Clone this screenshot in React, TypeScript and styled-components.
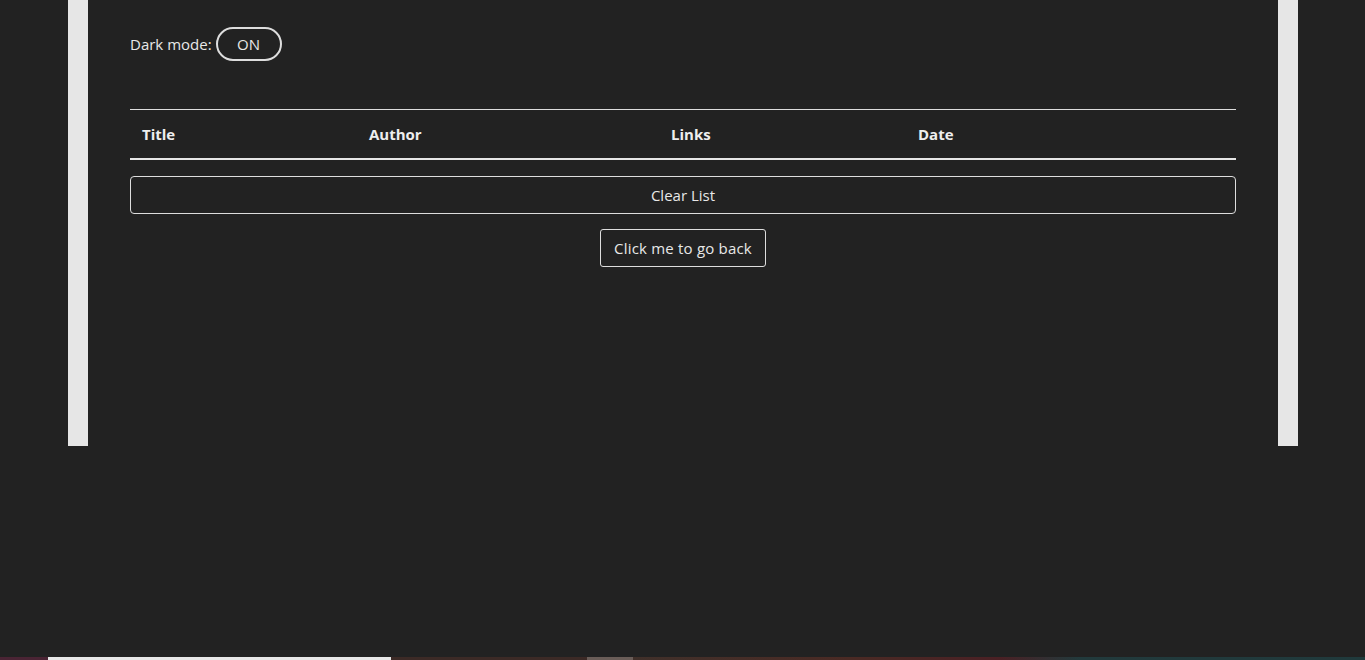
import React from "react";
import styled, { createGlobalStyle } from "styled-components";

const Global = createGlobalStyle`
  html, body { margin: 0; padding: 0; background: #222222; height: 100%; }
  body { font-family: "Open Sans", "Noto Sans", sans-serif; color: #e8e8e8; overflow: hidden; }
  #root { height: 100%; }
`;

const Page = styled.div`
  position: relative;
  height: 660px;
  background: #222222;
`;

const Frame = styled.div`
  margin: 0 67px 0 68px;
  height: 446px;
  border-left: 20px solid #e6e6e6;
  border-right: 20px solid #e6e6e6;
  background: #222222;
  padding: 27px 42px 0;
  box-sizing: border-box;
`;

const ModeRow = styled.div`
  display: flex;
  align-items: center;
  gap: 4px;
  font-size: 15px;
  height: 34px;
`;

const Toggle = styled.button`
  height: 34px;
  width: 66px;
  border: 2px solid #dddddd;
  border-radius: 17px;
  background: transparent;
  color: #e8e8e8;
  font-family: inherit;
  font-size: 15px;
  padding: 0;
`;

const Table = styled.table`
  margin-top: 48px;
  width: 100%;
  table-layout: fixed;
  border-collapse: collapse;
  border-top: 1px solid #dddddd;
  border-bottom: 2px solid #e6e6e6;
`;

const Th = styled.th<{ $w: number }>`
  width: ${(p) => p.$w}px;
  text-align: left;
  padding: 1px 12px 0;
  height: 49px;
  font-size: 15px;
  font-weight: 700;
  color: #eeeeee;
  box-sizing: border-box;
`;

const Wide = styled.button`
  display: block;
  width: 100%;
  margin-top: 16px;
  height: 38px;
  background: transparent;
  border: 1px solid #dddddd;
  border-radius: 4px;
  color: #e8e8e8;
  font-family: inherit;
  font-size: 15px;
`;

const Center = styled.div`
  display: flex;
  justify-content: center;
  margin-top: 15px;
`;

const Back = styled.button`
  height: 38px;
  width: 166px;
  background: transparent;
  border: 1px solid #dddddd;
  border-radius: 3px;
  color: #e8e8e8;
  font-family: inherit;
  font-size: 15px;
  letter-spacing: 0.2px;
  padding: 0;
`;

const Strip = styled.div`
  position: absolute;
  left: 0;
  right: 0;
  bottom: 0;
  height: 3px;
  background: linear-gradient(
    to right,
    #4a2434 0px,
    #4a2434 48px,
    #e8e8e8 48px,
    #e8e8e8 391px,
    #3c2a26 391px,
    #3c2a26 587px,
    #6a5d58 587px,
    #6a5d58 633px,
    #40302a 633px,
    #4a2a24 850px,
    #4a2024 1000px,
    #223a3c 1080px,
    #203a3c 1365px
  );
`;

export default function App() {
  return (
    <Page>
      <Global />
      <Frame>
        <ModeRow>
          <span>Dark mode:</span>
          <Toggle>ON</Toggle>
        </ModeRow>
        <Table>
          <thead>
            <tr>
              <Th $w={227}>Title</Th>
              <Th $w={302}>Author</Th>
              <Th $w={247}>Links</Th>
              <Th $w={330}>Date</Th>
            </tr>
          </thead>
        </Table>
        <Wide>Clear List</Wide>
        <Center>
          <Back>Click me to go back</Back>
        </Center>
      </Frame>
      <Strip />
    </Page>
  );
}
